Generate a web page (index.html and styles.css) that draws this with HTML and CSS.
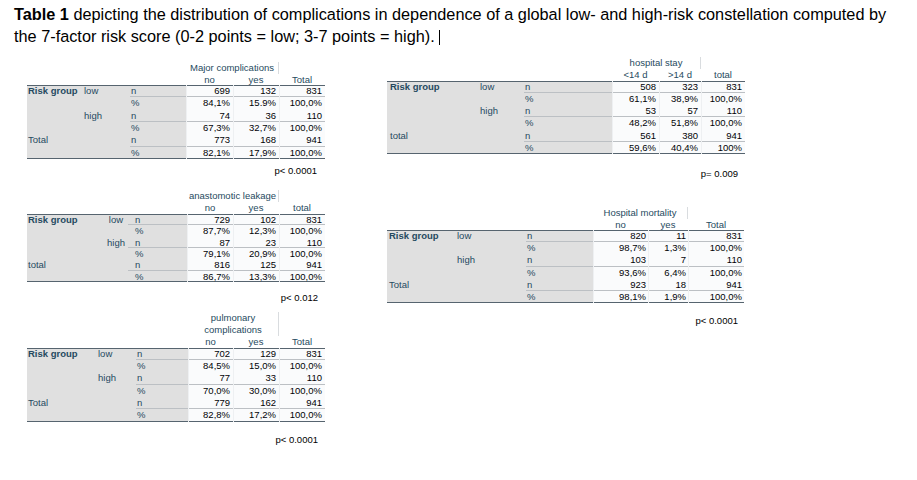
FILE: index.html
```html
<!DOCTYPE html>
<html lang="en">
<head>
<meta charset="utf-8">
<title>Table 1</title>
<link rel="stylesheet" href="styles.css">
</head>
<body>
<p class="title"><b>Table 1</b><span> depicting the distribution of complications in dependence of a global low- and high-risk constellation computed by</span><br><span>the 7-factor risk score (0-2 points = low; 3-7 points = high).</span><span class="caret"></span></p>

<div class="cols">
  <div class="col">
    <section class="xt xt-major">
      <div class="xt-grid g-major">
        <div class="row hr1"><span class="sp3"></span><span class="htitle">Major complications</span><span></span></div>
        <div class="row hr2"><span class="sp3"></span><span class="hd">no</span><span class="hd">yes</span><span class="hd">Total</span></div>
        <div class="row rn first"><span class="a"><b>Risk group</b></span><span class="b">low</span><span class="c">n</span><span class="num">699</span><span class="num">132</span><span class="num">831</span></div>
        <div class="row"><span class="a"></span><span class="b"></span><span class="c">%</span><span class="num">84,1%</span><span class="num">15.9%</span><span class="num">100,0%</span></div>
        <div class="row rn"><span class="a"></span><span class="b">high</span><span class="c">n</span><span class="num">74</span><span class="num">36</span><span class="num">110</span></div>
        <div class="row"><span class="a"></span><span class="b"></span><span class="c">%</span><span class="num">67,3%</span><span class="num">32,7%</span><span class="num">100,0%</span></div>
        <div class="row rn"><span class="a">Total</span><span class="b"></span><span class="c">n</span><span class="num">773</span><span class="num">168</span><span class="num">941</span></div>
        <div class="row last"><span class="a"></span><span class="b"></span><span class="c">%</span><span class="num">82,1%</span><span class="num">17,9%</span><span class="num">100,0%</span></div>
      </div>
      <div class="pval pv-major">p&lt; 0.0001</div>
    </section>

    <section class="xt xt-leak">
      <div class="xt-grid g-leak">
        <div class="row hr1"><span class="sp3"></span><span class="htitle">anastomotic leakage</span><span></span></div>
        <div class="row hr2"><span class="sp3"></span><span class="hd">no</span><span class="hd">yes</span><span class="hd">total</span></div>
        <div class="row rn first"><span class="a"><b>Risk group</b></span><span class="b">low</span><span class="c">n</span><span class="num">729</span><span class="num">102</span><span class="num">831</span></div>
        <div class="row"><span class="a"></span><span class="b"></span><span class="c">%</span><span class="num">87,7%</span><span class="num">12,3%</span><span class="num">100,0%</span></div>
        <div class="row rn"><span class="a"></span><span class="b">high</span><span class="c">n</span><span class="num">87</span><span class="num">23</span><span class="num">110</span></div>
        <div class="row"><span class="a"></span><span class="b"></span><span class="c">%</span><span class="num">79,1%</span><span class="num">20,9%</span><span class="num">100,0%</span></div>
        <div class="row rn"><span class="a">total</span><span class="b"></span><span class="c">n</span><span class="num">816</span><span class="num">125</span><span class="num">941</span></div>
        <div class="row last"><span class="a"></span><span class="b"></span><span class="c">%</span><span class="num">86,7%</span><span class="num">13,3%</span><span class="num">100,0%</span></div>
      </div>
      <div class="pval pv-leak">p&lt; 0.012</div>
    </section>

    <section class="xt xt-pulm">
      <div class="xt-grid g-pulm">
        <div class="row hr1"><span class="sp3"></span><span class="htitle wrap">pulmonary complications</span><span></span></div>
        <div class="row hr2"><span class="sp3"></span><span class="hd">no</span><span class="hd">yes</span><span class="hd">Total</span></div>
        <div class="row rn first"><span class="a"><b>Risk group</b></span><span class="b">low</span><span class="c">n</span><span class="num">702</span><span class="num">129</span><span class="num">831</span></div>
        <div class="row"><span class="a"></span><span class="b"></span><span class="c">%</span><span class="num">84,5%</span><span class="num">15,0%</span><span class="num">100,0%</span></div>
        <div class="row rn"><span class="a"></span><span class="b">high</span><span class="c">n</span><span class="num">77</span><span class="num">33</span><span class="num">110</span></div>
        <div class="row"><span class="a"></span><span class="b"></span><span class="c">%</span><span class="num">70,0%</span><span class="num">30,0%</span><span class="num">100,0%</span></div>
        <div class="row rn"><span class="a">Total</span><span class="b"></span><span class="c">n</span><span class="num">779</span><span class="num">162</span><span class="num">941</span></div>
        <div class="row last"><span class="a"></span><span class="b"></span><span class="c">%</span><span class="num">82,8%</span><span class="num">17,2%</span><span class="num">100,0%</span></div>
      </div>
      <div class="pval pv-pulm">p&lt; 0.0001</div>
    </section>
  </div>

  <div class="col">
    <section class="xt xt-stay">
      <div class="xt-grid g-stay">
        <div class="row hr1"><span class="sp3"></span><span class="htitle">hospital stay</span><span></span></div>
        <div class="row hr2"><span class="sp3"></span><span class="hd">&lt;14 d</span><span class="hd">&gt;14 d</span><span class="hd">total</span></div>
        <div class="row rn first"><span class="a"><b>Risk group</b></span><span class="b">low</span><span class="c">n</span><span class="num">508</span><span class="num">323</span><span class="num">831</span></div>
        <div class="row"><span class="a"></span><span class="b"></span><span class="c">%</span><span class="num">61,1%</span><span class="num">38,9%</span><span class="num">100,0%</span></div>
        <div class="row rn"><span class="a"></span><span class="b">high</span><span class="c">n</span><span class="num">53</span><span class="num">57</span><span class="num">110</span></div>
        <div class="row"><span class="a"></span><span class="b"></span><span class="c">%</span><span class="num">48,2%</span><span class="num">51,8%</span><span class="num">100,0%</span></div>
        <div class="row rn"><span class="a">total</span><span class="b"></span><span class="c">n</span><span class="num">561</span><span class="num">380</span><span class="num">941</span></div>
        <div class="row last"><span class="a"></span><span class="b"></span><span class="c">%</span><span class="num">59,6%</span><span class="num">40,4%</span><span class="num">100%</span></div>
      </div>
      <div class="pval pv-stay">p= 0.009</div>
    </section>

    <section class="xt xt-mort">
      <div class="xt-grid g-mort">
        <div class="row hr1"><span class="sp3"></span><span class="htitle">Hospital mortality</span><span></span></div>
        <div class="row hr2"><span class="sp3"></span><span class="hd">no</span><span class="hd">yes</span><span class="hd">Total</span></div>
        <div class="row rn first"><span class="a"><b>Risk group</b></span><span class="b">low</span><span class="c">n</span><span class="num">820</span><span class="num">11</span><span class="num">831</span></div>
        <div class="row"><span class="a"></span><span class="b"></span><span class="c">%</span><span class="num">98,7%</span><span class="num">1,3%</span><span class="num">100,0%</span></div>
        <div class="row rn"><span class="a"></span><span class="b">high</span><span class="c">n</span><span class="num">103</span><span class="num">7</span><span class="num">110</span></div>
        <div class="row"><span class="a"></span><span class="b"></span><span class="c">%</span><span class="num">93,6%</span><span class="num">6,4%</span><span class="num">100,0%</span></div>
        <div class="row rn"><span class="a">Total</span><span class="b"></span><span class="c">n</span><span class="num">923</span><span class="num">18</span><span class="num">941</span></div>
        <div class="row last"><span class="a"></span><span class="b"></span><span class="c">%</span><span class="num">98,1%</span><span class="num">1,9%</span><span class="num">100,0%</span></div>
      </div>
      <div class="pval pv-mort">p&lt; 0.0001</div>
    </section>
  </div>
</div>
</body>
</html>
```

FILE: styles.css
```css
* { box-sizing: border-box; }

body {
  margin: 0;
  background: #ffffff;
  color: #000000;
  font-family: "Liberation Sans", Arial, sans-serif;
}

.title {
  margin: 0;
  padding: 4px 14px 0;
  font-size: 16.3px;
  line-height: 21.6px;
  color: #000;
  white-space: nowrap;
}

.caret {
  display: inline-block;
  width: 1px;
  height: 15px;
  margin-left: 4px;
  background: #000;
  vertical-align: -3px;
}

.cols {
  display: grid;
  grid-template-columns: 360px 1fr;
  padding-left: 27px;
  align-items: start;
}

.col {
  display: flex;
  flex-direction: column;
  align-items: flex-start;
}

.xt {
  font-size: 9.5px;
}

.xt-grid {
  --rh: 12.3px;
  display: grid;
  grid-template-rows: 12px 11px repeat(6, var(--rh));
}

.row { display: contents; }

.xt-grid span {
  white-space: nowrap;
  line-height: var(--rh);
  overflow: visible;
}

.hr1 > span, .hr2 > span { line-height: 12px; }

.sp3 { grid-column: span 3; }

.htitle {
  grid-column: span 2;
  text-align: center;
  color: #264a60;
  border-right: 1px solid #d9dcdf;
}

.htitle.wrap { white-space: normal; padding: 0 12px; }

.hd {
  text-align: center;
  color: #264a60;
}

.a, .b, .c {
  background: #e0e0e0;
  color: #264a60;
  padding-left: 1px;
}

.num {
  background: #fafbfc;
  color: #010205;
  text-align: right;
  padding-right: 3px;
  border-left: 1px solid #eef0f2;
}

.rn > .c, .rn > .num { box-shadow: inset 0 -1px #bcc0c4; }
.first > span { box-shadow: inset 0 1px #56646f; }
.first.rn > .c, .first.rn > .num { box-shadow: inset 0 1px #56646f, inset 0 -1px #bcc0c4; }
.last > span { box-shadow: inset 0 -1px #56646f; }

/* per-table geometry */
.g-major {
  --rh: 12.33px;
  grid-template-columns: 56px 47px 56px 47px 46px 46px;
}
.xt-major { margin-top: 14.8px; }

.g-leak {
  --rh: 11.33px;
  grid-template-columns: 77px 24px 59px 46px 46px 46px;
  grid-template-rows: 12px 12px repeat(6, var(--rh));
}
.g-leak .b { text-align: center; padding-left: 0; }
.g-leak .c { padding-left: 7px; }
.xt-leak { margin-top: 13px; }

.g-pulm {
  --rh: 12.28px;
  grid-template-columns: 70px 39px 52px 45px 46px 46px;
  grid-template-rows: 24px 12px repeat(6, var(--rh));
}
.xt-pulm { margin-top: 8px; }

.g-stay {
  --rh: 12.17px;
  grid-template-columns: 92px 45px 88px 47px 42px 44px;
  grid-template-rows: 12px 12px repeat(6, var(--rh));
}
.g-stay .a { padding-left: 3px; }
.xt-stay { margin-top: 9.8px; }

.g-mort {
  --rh: 12.25px;
  grid-template-columns: 69px 70px 67px 55px 40px 56px;
  grid-template-rows: 12px 11.3px repeat(6, var(--rh));
}
.g-mort .a { padding-left: 2px; }
.g-mort .num { padding-right: 2px; }
.xt-mort { margin-top: 26.7px; }

.pval {
  text-align: right;
  padding-right: 7px;
  line-height: 12px;
  color: #000;
}
.pv-major { margin-top: 6px; padding-right: 8px; }
.pv-leak { margin-top: 10px; }
.pv-pulm { margin-top: 12px; }
.pv-stay { margin-top: 14px; }
.pv-mort { margin-top: 11.2px; padding-right: 6px; }
```
